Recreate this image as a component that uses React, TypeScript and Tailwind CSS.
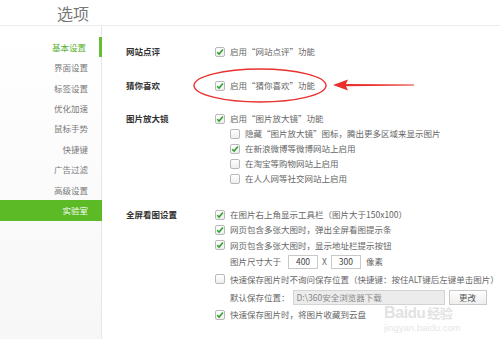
const font = { fontFamily: '"Noto Sans CJK SC", "Noto Sans", sans-serif' };

function Check({ on }: { on?: boolean }) {
  return (
    <span className="flex h-[10px] w-[10px] shrink-0 items-center justify-center rounded-[2px] border border-[#b9b9b9] bg-gradient-to-b from-white to-[#eeeeee]">
      {on && (
        <svg width="8" height="8" viewBox="0 0 8 8">
          <path d="M1.2 4.2 L3.1 6.1 L6.9 1.6" fill="none" stroke="#2ea32e" strokeWidth="1.6" />
        </svg>
      )}
    </span>
  );
}

function Opt({ on, children, sub, h = 15 }: { on?: boolean; children: React.ReactNode; sub?: boolean; h?: number }) {
  return (
    <div className={`flex items-center gap-[5px] ${sub ? "pl-[15px]" : ""}`} style={{ height: h }}>
      <Check on={on} />
      <span className="whitespace-nowrap">{children}</span>
    </div>
  );
}

const menu = ["基本设置", "界面设置", "标签设置", "优化加速", "鼠标手势", "快捷键", "广告过滤", "高级设置", "实验室"];

export default function App() {
  return (
    <div className="relative h-[339px] w-[500px] overflow-hidden bg-white text-[8.5px] text-[#666]" style={font}>
      {/* header */}
      <div className="flex h-[26px] items-center border-b border-[#ececec] pl-[57px]">
        <span className="text-[16px] leading-none text-[#777]">选项</span>
      </div>

      <div className="flex h-[313px]">
        {/* sidebar */}
        <div className="flex w-[102px] shrink-0 flex-col border-r border-[#e6e6e6] bg-gradient-to-b from-white to-[#f7f7f7] pt-[11px]">
          {menu.map((m, i) => (
            <div
              key={m}
              className={`flex h-[20.4px] items-center justify-end pr-[13px] ${
                i === 0 ? "-mr-px border-r-[3px] border-[#62bf36] pr-[11px] text-[#55b12f]" : ""
              } ${i === 8 ? "-mr-px bg-[#5cba27] pr-[14px] text-white" : ""} ${i > 0 && i < 8 ? "text-[#7a7a7a]" : ""}`}
            >
              {m}
            </div>
          ))}
        </div>

        {/* content */}
        <div className="flex-1 pl-[24px] pt-[18px]">
          <div className="flex">
            <div className="w-[89px] shrink-0 font-bold leading-[15px] text-[#333]">网站点评</div>
            <Opt on>启用“网站点评”功能</Opt>
          </div>

          <div className="mt-[19px] flex">
            <div className="w-[89px] shrink-0 font-bold leading-[15px] text-[#333]">猜你喜欢</div>
            <Opt on>启用“猜你喜欢”功能</Opt>
          </div>

          <div className="mt-[18px] flex">
            <div className="w-[89px] shrink-0 font-bold leading-[15px] text-[#333]">图片放大镜</div>
            <div className="flex flex-col">
              <Opt on>启用“图片放大镜”功能</Opt>
              <Opt sub>隐藏“图片放大镜”图标，腾出更多区域来显示图片</Opt>
              <Opt sub on>在新浪微博等微博网站上启用</Opt>
              <Opt sub>在淘宝等购物网站上启用</Opt>
              <Opt sub>在人人网等社交网站上启用</Opt>
            </div>
          </div>

          <div className="mt-[21px] flex">
            <div className="w-[89px] shrink-0 font-bold leading-[15px] text-[#333]">全屏看图设置</div>
            <div className="flex flex-col">
              <Opt on>在图片右上角显示工具栏（图片大于150x100）</Opt>
              <Opt on>网页包含多张大图时，弹出全屏看图提示条</Opt>
              <Opt on h={16}>网页包含多张大图时，显示地址栏提示按钮</Opt>
              <div className="flex h-[17px] items-center whitespace-nowrap pl-[15px]">
                图片尺寸大于
                <span className="ml-[7px] flex h-[14px] w-[30px] items-center justify-center border border-[#c9c9c9] text-[#444]">400</span>
                <span className="mx-[4px]">X</span>
                <span className="flex h-[14px] w-[30px] items-center justify-center border border-[#c9c9c9] text-[#444]">300</span>
                <span className="ml-[5px]">像素</span>
              </div>
              <Opt h={18}>快速保存图片时不询问保存位置（快捷键：按住ALT键后左键单击图片）</Opt>
              <div className="flex h-[18px] items-center whitespace-nowrap pl-[15px]">
                默认保存位置：
                <span className="ml-[3px] flex h-[15px] w-[152px] items-center border border-[#d4d4d4] bg-[#ececec] pl-[3px] text-[#888]">
                  D:\360安全浏览器下载
                </span>
                <span className="ml-[4px] flex h-[15px] w-[38px] items-center justify-center border border-[#c9c9c9] bg-gradient-to-b from-white to-[#eeeeee] text-[#555]">
                  更改
                </span>
              </div>
              <Opt on h={17}>快速保存图片时，将图片收藏到云盘</Opt>
            </div>
          </div>
        </div>
      </div>

      {/* red annotation */}
      <svg className="pointer-events-none absolute left-0 top-0" width="500" height="339">
        <ellipse cx="260" cy="85.5" rx="66" ry="16.5" fill="none" stroke="#e8302c" strokeWidth="1.4" />
        <path d="M333 85 L348 79.5 L346 84 L414 84.6 L414 85.4 L346 86.3 L348 90.5 Z" fill="#e8302c" />
      </svg>

      {/* watermark */}
      <div
        className="pointer-events-none absolute left-[384px] top-[305px] flex flex-col items-start leading-none text-[#d6d6d6]"
        style={{ fontFamily: '"Liberation Sans", "Noto Sans CJK SC", sans-serif' }}
      >
        <span className="text-[16px] font-bold tracking-tight opacity-70">
          Bai<span className="text-[15px]">du</span>
          <span className="ml-[2px] text-[13px]">经验</span>
        </span>
        <span className="mt-[2px] text-[9.5px] opacity-60">jingyan.baidu.com</span>
      </div>
    </div>
  );
}
